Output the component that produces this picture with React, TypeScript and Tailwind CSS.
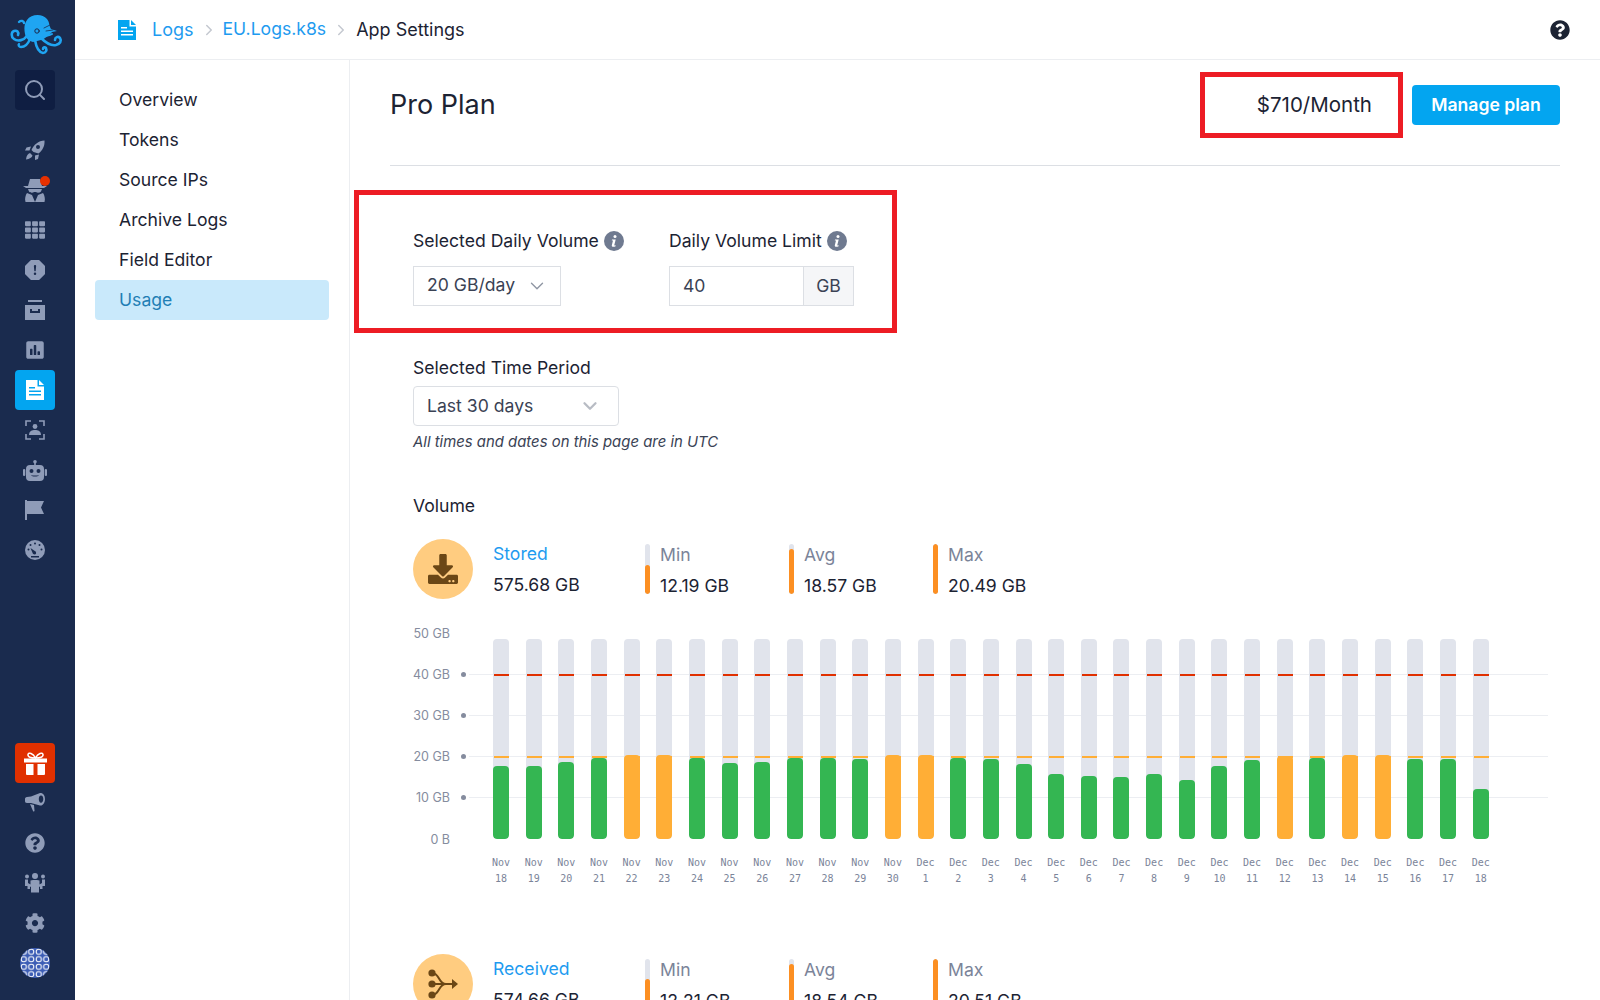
import { ChevronDown, ChevronRight, Search } from 'lucide-react';
import { BsExclamationOctagonFill } from 'react-icons/bs';
import { FaCog, FaDownload, FaPoll, FaQuestionCircle, FaTh } from 'react-icons/fa';

const Octopus = () => (
  <svg width="54" height="42" viewBox="0 0 54 42" fill="none" stroke="#1fa5f2" strokeLinecap="round" className="block">
    <path d="M17 6c4-6 15-7 20-1 3 4 2 7 4 10l6 2-5 1c-3 3-7 7-11 8l-8 2c-4-1-7-3-8-8-1-5-1-10 2-14z" fill="#1fa5f2" stroke="none" />
    <path d="M17 22c-3 4-9 6-13 3-3-2-3-7 0-8 3-1 5 1 4 4" strokeWidth="2.600" />
    <path d="M9 8c2-2 5-1 5 1M20 25c-2 5-5 8-9 8-2 0-3-2-2-3" strokeWidth="2.400" />
    <path d="M25 26c1 6 3 12 8 13 3 0 4-3 3-5-1-1-3-1-3 1" strokeWidth="2.600" />
    <path d="M31 24c5 5 10 8 15 7 4-1 6-4 4-7-2-2-5-1-5 2" strokeWidth="2.600" />
    <path d="M33 21c3 1 6 1 9-1" strokeWidth="2" />
    <circle cx="27" cy="17" r="2.200" fill="none" stroke="#1a2b4e" strokeWidth="1" />
    <path d="M34 14l6-3M36 17l7-1" stroke="#1a2b4e" strokeWidth="0.800" />
  </svg>
);

const RocketIcon = () => (
  <svg width="20" height="20" viewBox="0 0 20 20" fill="currentColor" className="block">
    <path fillRule="evenodd" d="M19.500.5c.4 5-1.500 9.500-6 13l-5-1.500-2-2C8.500 5 13.500.5 19.500.5zM13 5a2 2 0 100 4 2 2 0 000-4z" />
    <path d="M6 6.500L1.500 7.500 0 10.500h4.500zM14 14.500l-1 4.500-3 1v-4.500zM5 13c-2 .5-3.500 2.500-4 6.500 3.500-.5 6-2 6.500-4z" />
  </svg>
);

const SpyIcon = () => (
  <svg width="24" height="23" viewBox="0 0 24 23" fill="currentColor" className="block">
    <path d="M7 0h10l2 7h5l-3 2H3L0 7h5z" />
    <path d="M5 10h14l-1 2.500c-1 1.500-4 1.500-5 .5h-2c-1 1-4 1-5-.5z" />
    <path d="M4 14l5 2 3 7H2.500C1.500 20 2.500 16 4 14zM20 14l-5 2-3 7h9.500c1-3 0-7-1.500-9z" />
  </svg>
);

const ArchiveIcon = () => (
  <svg width="20" height="20" viewBox="0 0 20 20" fill="currentColor" className="block">
    <path d="M3 0h14v2H3z" />
    <path fillRule="evenodd" d="M0 5h20v15H0zM5 9v4h10V9h-2v2H7V9z" />
  </svg>
);

const FileIcon = () => (
  <svg width="18" height="20" viewBox="0 0 18 20" className="block" fill="currentColor">
    <path fillRule="evenodd" d="M0 0h11.500v6.500H18V20H0zM3 7v1.500h6V7zM3 10.500V12h12v-1.500zM3 14v1.500h12V14z" />
    <path d="M13 0l5 5h-5z" />
  </svg>
);

const FaceScan = () => (
  <svg width="20" height="20" viewBox="0 0 20 20" fill="none" stroke="currentColor" strokeWidth="1.600" className="block">
    <path d="M1 6V1h5M14 1h5v5M19 14v5h-5M6 19H1v-5" />
    <circle cx="10" cy="6.500" r="2.400" fill="currentColor" stroke="none" />
    <path d="M4 15c0-4 3-5 6-5s6 1 6 5z" fill="currentColor" stroke="none" />
  </svg>
);

const RobotIcon = () => (
  <svg width="24" height="21" viewBox="0 0 24 21" fill="currentColor" className="block">
    <circle cx="12" cy="1.800" r="1.800" />
    <path d="M11.200 2h1.600v4h-1.600z" />
    <path fillRule="evenodd" d="M7 5h10a4 4 0 014 4v8a4 4 0 01-4 4H7a4 4 0 01-4-4V9a4 4 0 014-4zm1.500 4a2 2 0 100 4 2 2 0 000-4zm7 0a2 2 0 100 4 2 2 0 000-4zM8 15c1 2 7 2 8 0-1 .7-7 .7-8 0z" />
    <rect x="0" y="9" width="2.300" height="7" rx="1.100" />
    <rect x="21.700" y="9" width="2.300" height="7" rx="1.100" />
  </svg>
);

const FlagIcon = () => (
  <svg width="20" height="20" viewBox="0 0 20 20" fill="currentColor" className="block">
    <path d="M0 0h2v20H0z" />
    <path d="M2 1h17l-3 6.500 3 6.500H2z" />
  </svg>
);

const GaugeIcon = () => (
  <svg width="20" height="20" viewBox="0 0 20 20" className="block">
    <circle cx="10" cy="10" r="10" fill="currentColor" />
    <g fill="#1a2b4e">
      <circle cx="10" cy="3.500" r="1" />
      <circle cx="5.500" cy="5" r="1" />
      <circle cx="3.500" cy="9.500" r="1" />
      <circle cx="14.500" cy="5" r="1" />
      <circle cx="16.500" cy="9.500" r="1" />
      <path d="M5.500 8l5 3.500c1.200 1 .7 3-1 3-1 0-1.500-.5-1.800-1.200z" />
      <path d="M6 16h8v1.500H6z" />
    </g>
  </svg>
);

const GiftIcon = () => (
  <svg width="23" height="23" viewBox="0 0 23 23" className="block" fill="none" stroke="currentColor">
    <path d="M11.500 6C9 1 4.500 0 4 2.500S7 6 11.500 6c4.500 0 8-1 7.500-3.500S14 1 11.500 6z" strokeWidth="1.500" />
    <g fill="currentColor" stroke="none">
      <path d="M0 6.500h23V10.500H0z" />
      <path d="M2 12h7.500v11H3a1 1 0 01-1-1zM13.500 12H21v10a1 1 0 01-1 1h-6.500z" />
    </g>
  </svg>
);

const MegaphoneIcon = () => (
  <svg width="20" height="20" viewBox="0 0 20 20" fill="currentColor" className="block">
    <path fillRule="evenodd" d="M15 0c3-.5 5 2.500 5 6s-2 7-5 6.500L6 10H2C.5 10 0 9 0 8V6c0-1 .5-2 2-2l4-.5zm1 2.500c-1.500 0-2.200 1.800-2.200 3.500s.7 3.800 2.200 3.800 2.300-2 2.300-3.800-.8-3.500-2.300-3.500z" />
    <path d="M5 11l4 1 .5 5.500c0 1-1 1.500-1.500.5z" />
  </svg>
);

const TeamIcon = () => (
  <svg width="20" height="20" viewBox="0 0 20 20" fill="currentColor" className="block">
    <circle cx="10" cy="3" r="3" />
    <circle cx="2" cy="3.500" r="2" />
    <circle cx="18" cy="3.500" r="2" />
    <path d="M0 6.500h3v3.500l2.500 1.500v-4L8 7h4l2.500.5v4L17 10V6.500h3V13h-2.500v3H15v-2.500l-1 .5v5.500H6V14l-1-.5V16H2.500v-3H0z" />
  </svg>
);

const InfoIcon = () => (
  <svg width="20" height="20" viewBox="0 0 20 20" className="ml-[5px] block">
    <circle cx="10" cy="10" r="10" fill="#6f7a90" />
    <circle cx="11" cy="5.500" r="1.500" fill="#fff" />
    <path d="M8 8.500h3.700L10.300 14c-.1.500.3.700 1.500.2l-.2 1c-2 1-4.100.8-3.800-1L9 9.500l-1.200-.1z" fill="#fff" />
  </svg>
);

const Avatar = () => (
  <svg width="30" height="30" viewBox="0 0 30 30" className="block">
    <defs>
      <pattern id="dots" width="7.500" height="7.500" patternUnits="userSpaceOnUse">
        <circle cx="3.750" cy="3.750" r="2.600" fill="none" stroke="#fff" strokeWidth="1" />
      </pattern>
    </defs>
    <circle cx="15" cy="15" r="15" fill="#3c5db5" />
    <circle cx="15" cy="15" r="15" fill="url(#dots)" />
  </svg>
);

const ReceivedIcon = () => (
  <svg width="30" height="30" viewBox="0 0 30 30" fill="none" stroke="#6b4716" strokeWidth="2" className="block">
    <circle cx="4" cy="4" r="3.600" fill="#6b4716" stroke="none" />
    <circle cx="4" cy="15" r="3.600" fill="#6b4716" stroke="none" />
    <circle cx="4" cy="26" r="3.600" fill="#6b4716" stroke="none" />
    <path d="M4 15h22M4 4c8 0 6 11 14 11M4 26c8 0 6-11 14-11" />
    <path d="M24 10l6 5-6 5z" fill="#6b4716" stroke="none" />
  </svg>
);

const iconClass = 'w-5 h-5';

const topIcons = [
  <RocketIcon />,
  <div className="relative">
    <SpyIcon />
    <span className="absolute -top-[3px] left-[17px] w-[10px] h-[10px] rounded-full bg-[#e63000]" />
  </div>,
  <FaTh className={iconClass} />,
  <BsExclamationOctagonFill className={iconClass} />,
  <ArchiveIcon />,
  <FaPoll className={iconClass} />,
];

const midIcons = [<FaceScan />, <RobotIcon />, <FlagIcon />, <GaugeIcon />];

const IconRow = ({ children, className = '' }: { children: React.ReactNode; className?: string }) => (
  <div className={`w-10 h-10 ml-[15px] flex items-center justify-center rounded ${className}`}>{children}</div>
);

const Sidebar = () => (
  <aside className="w-[75px] h-full shrink-0 bg-[#1a2b4e] text-[#8f9cb8] flex flex-col justify-between pb-[17px]">
    <div>
      <div className="h-[70px] pl-[10px] pt-[14px]">
        <Octopus />
      </div>
      <IconRow className="bg-[#0f1e42] mb-5">
        <Search className="w-6 h-6" strokeWidth={2} />
      </IconRow>
      {topIcons.map((icon, i) => (
        <IconRow key={i}>{icon}</IconRow>
      ))}
      <IconRow className="bg-[#03a5f0] text-white">
        <FileIcon />
      </IconRow>
      {midIcons.map((icon, i) => (
        <IconRow key={i}>{icon}</IconRow>
      ))}
    </div>
    <div>
      <IconRow className="bg-[#e03000] text-white">
        <GiftIcon />
      </IconRow>
      <IconRow>
        <MegaphoneIcon />
      </IconRow>
      <IconRow>
        <FaQuestionCircle className={iconClass} />
      </IconRow>
      <IconRow>
        <TeamIcon />
      </IconRow>
      <IconRow>
        <FaCog className={iconClass} />
      </IconRow>
      <IconRow>
        <Avatar />
      </IconRow>
    </div>
  </aside>
);

const navItems = ['Overview', 'Tokens', 'Source IPs', 'Archive Logs', 'Field Editor', 'Usage'];

const SideNav = () => (
  <nav className="w-[275px] shrink-0 border-r border-[#eceef1] pt-5 pl-5 pr-5">
    {navItems.map((item) => (
      <div
        key={item}
        className={`h-10 flex items-center pl-6 rounded text-[17.6px] ${
          item === 'Usage' ? 'bg-[#c9e9fb] text-[#1f7fb5]' : 'text-[#1c2333]'
        }`}
      >
        {item}
      </div>
    ))}
  </nav>
);

const StatBar = ({ label, value, emptyPct }: { label: string; value: string; emptyPct: number }) => (
  <div className="flex h-[50px] mt-[5px]">
    <div className="w-[5px] h-[50px] rounded-sm bg-[#e1e4ec] overflow-hidden flex flex-col justify-end">
      <div className="bg-[#fc8f22] rounded-sm" style={{ height: `${100 - emptyPct}%` }} />
    </div>
    <div className="ml-[10px] w-[129px] pt-[1px]">
      <div className="text-[17.6px] leading-[20px] text-[#7b8499]">{label}</div>
      <div className="text-[17.6px] leading-[24px] mt-[9px] text-[#1c2333]">{value}</div>
    </div>
  </div>
);

const StatsRow = ({
  icon,
  title,
  total,
  stats,
}: {
  icon: React.ReactNode;
  title: string;
  total: string;
  stats: { label: string; value: string; emptyPct: number }[];
}) => (
  <div className="flex h-[60px]">
    <div className="w-[60px] h-[60px] rounded-full bg-[#ffcc80] flex items-center justify-center shrink-0">{icon}</div>
    <div className="ml-5 w-[152px] shrink-0 pt-[1px]">
      <div className="text-[17.6px] leading-[20px] mt-1 text-[#1e9bf0]">{title}</div>
      <div className="text-[17.6px] leading-[24px] mt-[9px] text-[#1c2333]">{total}</div>
    </div>
    {stats.map((s) => (
      <StatBar key={s.label} {...s} />
    ))}
  </div>
);

const bars: { h: number; over?: boolean }[] = [
  { h: 73 }, { h: 73 }, { h: 77 }, { h: 81 }, { h: 84, over: true }, { h: 84, over: true },
  { h: 81 }, { h: 76 }, { h: 77 }, { h: 81 }, { h: 81 }, { h: 80 },
  { h: 84, over: true }, { h: 84, over: true }, { h: 81 }, { h: 80 }, { h: 75 }, { h: 65 },
  { h: 63 }, { h: 62 }, { h: 65 }, { h: 59 }, { h: 73 }, { h: 79 },
  { h: 83, over: true }, { h: 81 }, { h: 84, over: true }, { h: 84, over: true }, { h: 80 }, { h: 80 }, { h: 50 },
];

const days = [
  ...Array.from({ length: 13 }, (_, i) => ['Nov', String(18 + i)]),
  ...Array.from({ length: 18 }, (_, i) => ['Dec', String(1 + i)]),
];

const axisLabels = ['50 GB', '40 GB', '30 GB', '20 GB', '10 GB', '0 B'];

const Chart = () => (
  <div>
    <div className="relative w-[1135px] h-[226px] flex flex-col justify-between">
      {axisLabels.map((label, i) => (
        <div key={label} className="h-5 flex items-center">
          <span className="w-[37px] text-right text-[12.5px] text-[#858c9e] whitespace-nowrap pt-[2px]">{label}</span>
          {i > 0 && i < 5 && (
            <>
              <span className="ml-[11px] w-[5px] h-[5px] rounded-full bg-[#858c9e] shrink-0" />
              <span className="ml-[3px] flex-1 h-[1px] bg-[#eceef2]" />
            </>
          )}
        </div>
      ))}
      <div className="absolute left-[80px] top-4 w-[996px] h-[200px] flex justify-between">
        {bars.map((b, i) => (
          <div key={i} className="relative w-4 h-[200px] rounded bg-[#e1e4ec] overflow-hidden">
            <div className="absolute left-[1px] right-0 bottom-[163px] h-[2px] bg-[#e03000]" />
            <div className="absolute left-[1px] right-0 bottom-[81px] h-[2px] bg-[#ffae36]" />
            <div
              className={`absolute left-0 right-0 bottom-0 rounded ${b.over ? 'bg-[#ffae36]' : 'bg-[#34b652]'}`}
              style={{ height: b.h }}
            />
          </div>
        ))}
      </div>
    </div>
    <div className="mt-[6px] ml-[80px] w-[996px] flex justify-between font-['DejaVu_Sans_Mono',monospace] text-[10px] leading-4 text-[#7b8499]">
      {days.map(([m, d]) => (
        <div key={m + d} className="w-4 flex flex-col items-center">
          <span>{m}</span>
          <span>{d}</span>
        </div>
      ))}
    </div>
  </div>
);

const Label = ({ text, info }: { text: string; info?: boolean }) => (
  <div className="flex items-center h-6 text-[17.6px] text-[#1c2333] whitespace-nowrap">
    {text}
    {info && <InfoIcon />}
  </div>
);

export default function App() {
  return (
    <div className="w-full h-screen overflow-hidden flex bg-white font-['Inter',sans-serif]">
      <Sidebar />
      <div className="flex-1 min-w-0 flex flex-col">
        <header className="h-[60px] shrink-0 border-b border-[#eceef1] flex items-center pl-[43px] pr-[30px] text-[18px]">
          <span className="text-[#03a5f0]">
            <FileIcon />
          </span>
          <span className="ml-4 text-[#1e9bf0]">Logs</span>
          <ChevronRight className="ml-[6px] mr-[5px] w-[18px] h-[18px] text-[#c4c8d0]" />
          <span className="text-[#1e9bf0] text-[17.6px]">EU.Logs.k8s</span>
          <ChevronRight className="mx-[6px] w-[18px] h-[18px] text-[#c4c8d0]" />
          <span className="text-[#1c2333]">App Settings</span>
          <FaQuestionCircle className="ml-auto w-5 h-5 text-[#1c2333]" />
        </header>
        <div className="flex-1 min-h-0 flex">
          <SideNav />
          <main className="flex-1 min-w-0 overflow-hidden">
            <div className="mx-[40px] mt-3 pb-[27px] border-b border-[#dcdfe4] flex items-center justify-between">
              <h1 className="text-[27px] text-[#1c2333]">Pro Plan</h1>
              <div className="flex items-center">
                <div className="w-[203px] h-[66px] border-[5px] border-[#ed1c24] flex items-center justify-end pr-[26px] text-[20.5px] text-[#1c2333]">
                  $710/Month
                </div>
                <button className="ml-[9px] w-[148px] h-10 rounded bg-[#03a5f0] text-white text-[17.6px] font-semibold">
                  Manage plan
                </button>
              </div>
            </div>

            <div className="ml-1 mt-6 w-[543px] h-[143px] border-[5px] border-[#ed1c24] pl-[54px] pt-[34px] flex">
              <div className="w-[256px]">
                <Label text="Selected Daily Volume" info />
                <div className="mt-[13px] w-[148px] h-10 border border-[#dcdfe4] flex items-center justify-between pl-[13px] pr-[12px] pb-[1px] text-[17.6px] text-[#3a4254]">
                  20 GB/day
                  <ChevronDown className="w-[22px] h-[22px] text-[#8f96a3]" strokeWidth={1.5} />
                </div>
              </div>
              <div>
                <Label text="Daily Volume Limit" info />
                <div className="mt-[13px] w-[185px] h-10 border border-[#dcdfe4] flex items-center text-[17.6px] text-[#3a4254]">
                  <span className="flex-1 pl-[13px]">40</span>
                  <span className="w-[50px] h-full border-l border-[#dcdfe4] bg-[#f5f6f8] flex items-center justify-center">
                    GB
                  </span>
                </div>
              </div>
            </div>

            <div className="ml-[63px] mt-[23px]">
              <Label text="Selected Time Period" />
              <div className="mt-[6px] w-[206px] h-10 border border-[#dcdfe4] rounded flex items-center justify-between pl-[13px] pr-[17px] text-[17.6px] text-[#3a4254]">
                Last 30 days
                <ChevronDown className="w-[22px] h-[22px] text-[#b8bcc4]" strokeWidth={2.5} />
              </div>
              <div className="mt-[5px] h-[22px] flex items-center italic text-[14.9px] text-[#3a4254]">
                All times and dates on this page are in UTC
              </div>
              <div className="mt-[42px] h-[22px] flex items-center text-[17.6px] text-[#1c2333]">Volume</div>

              <div className="mt-[22px]">
                <StatsRow
                  icon={<FaDownload className="w-[30px] h-[30px] text-[#6b4716]" />}
                  title="Stored"
                  total="575.68 GB"
                  stats={[
                    { label: 'Min', value: '12.19 GB', emptyPct: 42 },
                    { label: 'Avg', value: '18.57 GB', emptyPct: 10 },
                    { label: 'Max', value: '20.49 GB', emptyPct: 0 },
                  ]}
                />
              </div>

              <div className="mt-6">
                <Chart />
              </div>

              <div className="mt-[67px]">
                <StatsRow
                  icon={<ReceivedIcon />}
                  title="Received"
                  total="574.66 GB"
                  stats={[
                    { label: 'Min', value: '12.21 GB', emptyPct: 40 },
                    { label: 'Avg', value: '18.54 GB', emptyPct: 10 },
                    { label: 'Max', value: '20.51 GB', emptyPct: 0 },
                  ]}
                />
              </div>
            </div>
          </main>
        </div>
      </div>
    </div>
  );
}
